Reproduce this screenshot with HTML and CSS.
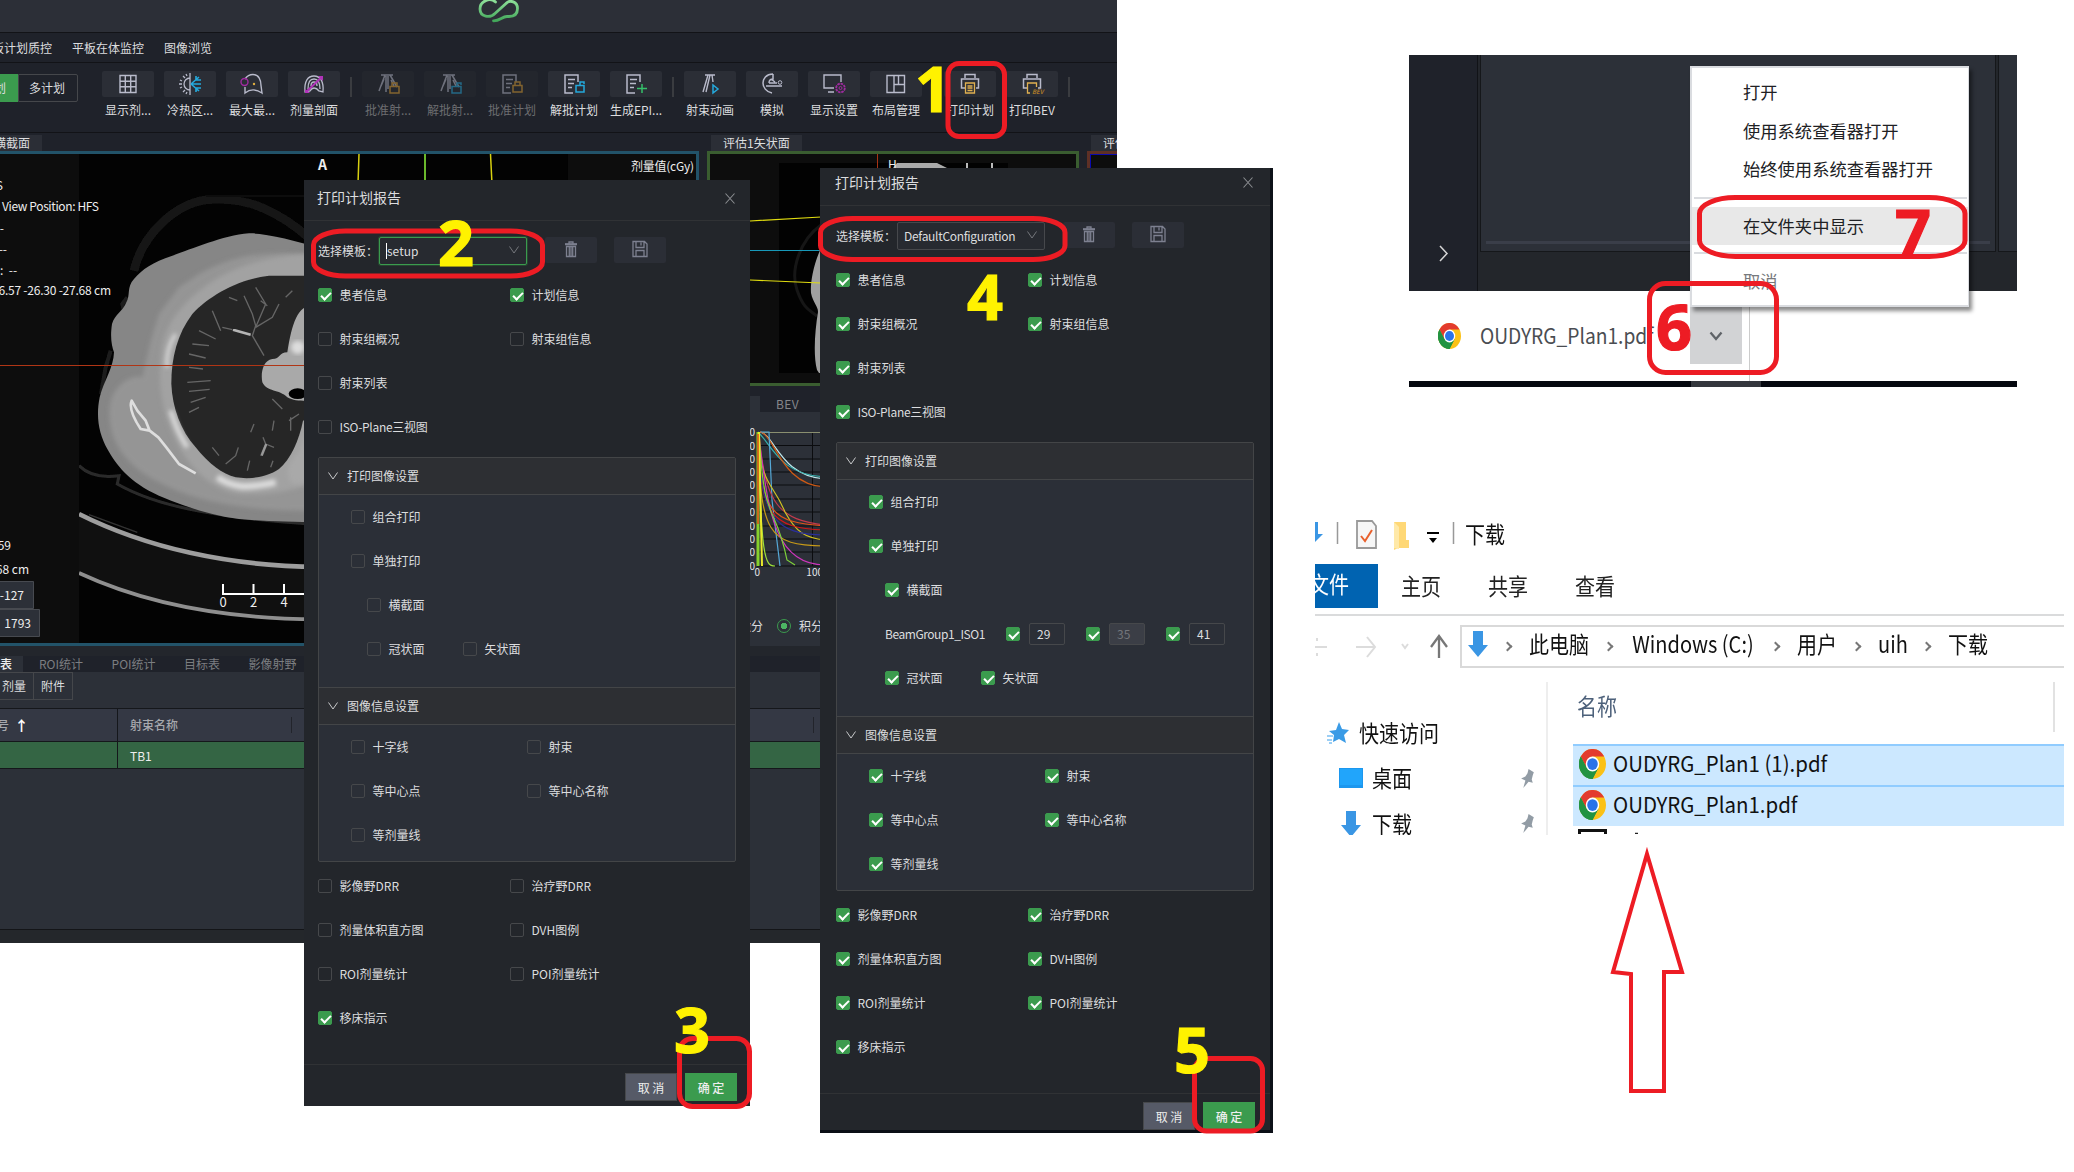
FILE: index.html
```html
<!DOCTYPE html>
<html lang="zh-CN">
<head>
<meta charset="utf-8">
<title>打印计划报告</title>
<link rel="stylesheet" href="styles.css">
</head>
<body>
<svg class="defs" width="0" height="0">
  <defs>
    <symbol id="chrome" viewBox="0 0 24 24" preserveAspectRatio="none">
      <circle cx="12" cy="12" r="12" fill="#fbc116"/>
      <path d="M1.600 6A12 12 0 0 0 12 24L17.200 15 6.800 15Z" fill="#229342"/>
      <path d="M1.600 6A12 12 0 0 1 22.400 6H12L6.800 15Z" fill="#e33b2e"/>
      <path d="M1.600 6A12 12 0 0 0 12 24L17.200 15 6.800 15Z" fill="#229342"/>
      <circle cx="12" cy="12" r="6" fill="#fff"/>
      <circle cx="12" cy="12" r="4.700" fill="#2a73e8"/>
    </symbol>
    <symbol id="trash" viewBox="0 0 14 18">
      <path d="M1 4.500h12M5 4V2h4v2M2.500 6.500v10h9v-10zM5.300 7v9M8.700 7v9M7 7v9" fill="none" stroke="#7d8090" stroke-width="1.300"/>
      <path d="M1 3.200h12v1.500H1z" fill="#7d8090"/>
    </symbol>
    <symbol id="save" viewBox="0 0 16 18">
      <path d="M1 1.500h11.500L15 4v12.500H1zM4 1.500v6h8v-6M9 2.500v3M4 16.500v-6h8v6" fill="none" stroke="#7d8090" stroke-width="1.300"/>
    </symbol>
    <symbol id="pin" viewBox="0 0 14 18">
      <path d="M8 0l5 3-1 3-1 4 1 3-4-1-5 6 2-7-4-2 4-2 2-3z" fill="#929ca5"/>
    </symbol>
    <symbol id="down" viewBox="0 0 20 26">
      <path d="M5 0h10v14h5L10 26 0 14h5z" fill="#3a96e4"/>
    </symbol>
    <symbol id="beam" viewBox="0 0 24 22">
      <path d="M5 2h12M9 2 3 18M10 3v16M12 3v13M14 2l7 12M8 6 5 13M15 7l3 6" fill="none" stroke="#b9bbcb" stroke-width="1.500"/>
    </symbol>
    <symbol id="doc" viewBox="0 0 24 22">
      <path d="M11 20H3V2h13v7M6 6.500h7M6 10.500h6M6 14.500h4" fill="none" stroke="#b9bbcb" stroke-width="1.500"/>
    </symbol>
    <symbol id="printer" viewBox="0 0 24 22">
      <path d="M7 5V1.500h10V5M7 15H3.500V6h17v9H18" fill="none" stroke="#b9bbcb" stroke-width="1.500"/>
    </symbol>
  </defs>
</svg>

<main class="canvas">
<section class="app">
  <header class="titlebar">
    <svg class="brand" viewBox="0 0 44 24" width="44" height="24">
      <defs><linearGradient id="lg" gradientUnits="userSpaceOnUse" x1="0" y1="0" x2="0" y2="22"><stop offset="0" stop-color="#8fe09a"/><stop offset="1" stop-color="#3fa457"/></linearGradient></defs>
      <path d="M18.500 2C13-3 3 1 3 9c0 8 10 9.500 15 4.500L29 3.500C33-1 40.500 2 40.500 8.500 40.500 14 37 16.500 32 16.500h-2C25 16.500 23 21 16.500 20.800" fill="none" stroke="url(#lg)" stroke-width="2.800" stroke-linecap="round"/>
    </svg>
  </header>
  <nav class="menubar"><span>板计划质控</span><span>平板在体监控</span><span>图像浏览</span></nav>
  <div class="toolbar">
    <div class="segment"><b>划</b><span>多计划</span></div>
    <div class="tools">
      <div class="tool"><i><svg viewBox="0 0 24 22"><path d="M4 2.500h16v17H4zM9.300 2.500v17M14.700 2.500v17M4 8.200h16M4 13.800h16" fill="none" stroke="#b9bbcb" stroke-width="1.400"/></svg></i><span>显示剂...</span></div>
      <div class="tool"><i><svg viewBox="0 0 24 22"><path d="M12 5a6 6 0 0 0 0 12zM12 0v22M5 3l2 2M1 11h3M5 19l2-2M8 1l1 2M2 7l2 1M2 15l2-1M8 21l1-2" fill="none" stroke="#b9bbcb" stroke-width="1.300"/><path d="M13 11h10M13 11l8-7M13 11l8 7M18 3v4h5M18 19v-4h5" fill="none" stroke="#25a9dc" stroke-width="1.600"/></svg></i><span>冷热区...</span></div>
      <div class="tool"><i><svg viewBox="0 0 24 22"><path d="M5 6C7 3 10 1.500 13 1.500c6 0 8 6 8 11l1 7.500c-6-4-12-4-17 0V14" fill="none" stroke="#b9bbcb" stroke-width="1.400"/><circle cx="4.500" cy="9" r="3.500" fill="none" stroke="#a02aa0" stroke-width="1.400"/><circle cx="14" cy="11" r="1.200" fill="#e0b040"/></svg></i><span>最大最...</span></div>
      <div class="tool"><i><svg viewBox="0 0 24 22"><path d="M3 19C2 8 6 3 12 3s10 5 9 16l-4-1C14 14 10 14 8 18zM6 16c0-7 2-10 6-10s6 3 6 10M9 13c0-3 1-4 3-4s3 2 3 4" fill="none" stroke="#b9bbcb" stroke-width="1.300"/><path d="M4 19 20 4" stroke="#b033b8" stroke-width="2"/><path d="M16 3h5v5zM3 16v4h5z" fill="#b033b8"/></svg></i><span>剂量剖面</span></div>
      <hr>
      <div class="tool off"><i><svg viewBox="0 0 24 22"><use href="#beam"/><path d="M14 13.500h9V20h-9zM16 13v-3h5v3" fill="none" stroke="#e0a030" stroke-width="1.500"/></svg></i><span>批准射...</span></div>
      <div class="tool off"><i><svg viewBox="0 0 24 22"><use href="#beam"/><path d="M14 13.500h9V20h-9zM19 13v-3h4v2" fill="none" stroke="#25a9dc" stroke-width="1.500"/></svg></i><span>解批射...</span></div>
      <div class="tool off"><i><svg viewBox="0 0 24 22"><use href="#doc"/><path d="M13 12.500h9V19h-9zM15 12V9h5v3" fill="none" stroke="#e0a030" stroke-width="1.500"/></svg></i><span>批准计划</span></div>
      <div class="tool"><i><svg viewBox="0 0 24 22"><use href="#doc"/><path d="M14 12.500h8V19h-8zM18 12V9h4v2" fill="none" stroke="#25a9dc" stroke-width="1.500"/></svg></i><span>解批计划</span></div>
      <div class="tool"><i><svg viewBox="0 0 24 22"><use href="#doc"/><path d="M13 15.500h10M18 11v9" fill="none" stroke="#35c06a" stroke-width="1.500"/></svg></i><span>生成EPI...</span></div>
      <hr>
      <div class="tool"><i><svg viewBox="0 0 24 22"><path d="M7 2h10M10 2 5 19M12 2 8 19M14 2l1 7" fill="none" stroke="#b9bbcb" stroke-width="1.400"/><path d="M15 12v8l5-4z" fill="none" stroke="#25a9dc" stroke-width="1.500"/></svg></i><span>射束动画</span></div>
      <div class="tool"><i><svg viewBox="0 0 24 22"><path d="M13 1C6 1 3 6 3 10s3 9 9 10M13 1v5c-3 0-4 1-4 4M6 13h16M9 10h8M11 6l4 3" fill="none" stroke="#b9bbcb" stroke-width="1.500"/><circle cx="20" cy="9.500" r="1.800" fill="none" stroke="#b9bbcb"/></svg></i><span>模拟</span></div>
      <div class="tool"><i><svg viewBox="0 0 24 22"><path d="M12 15H2V2h17v7M6 19h6" fill="none" stroke="#b9bbcb" stroke-width="1.400"/><circle cx="18.500" cy="15" r="4.300" fill="none" stroke="#a02aa0" stroke-width="1.800" stroke-dasharray="2.500 .8"/><circle cx="18.500" cy="15" r="1.500" fill="none" stroke="#a02aa0"/></svg></i><span>显示设置</span></div>
      <div class="tool"><i><svg viewBox="0 0 24 22"><path d="M3 2.500h17.500v17H3zM10 2.500v17M14.500 2.500v9M10 11.500h10.500" fill="none" stroke="#b9bbcb" stroke-width="1.400"/></svg></i><span>布局管理</span></div>
      <hr>
      <div class="tool"><i><svg viewBox="0 0 24 22"><use href="#printer"/><path d="M7.500 10h9v10h-9zM9.500 13h5M9.500 15h5M9.500 17.500h5" fill="none" stroke="#e0b050" stroke-width="1.300"/></svg></i><span>打印计划</span></div>
      <div class="tool"><i><svg viewBox="0 0 24 22"><use href="#printer"/><path d="M10 20H7.500V10h9v4" fill="none" stroke="#e0b050" stroke-width="1.300"/><text x="12" y="21" font-size="6" font-weight="700" fill="#a8772a">BEV</text></svg></i><span>打印BEV</span></div>
      <hr>
    </div>
  </div>

  <div class="work">
    <div class="col axial">
      <div class="viewtabs"><span>横截面</span></div>
      <div class="view">
        <svg class="scene" viewBox="0 154 696 489" width="696" height="489">
          <defs>
            <filter id="s1"><feGaussianBlur stdDeviation="2"/></filter>
            <filter id="s2"><feGaussianBlur stdDeviation="6"/></filter>
            <filter id="s3" x="-20%" y="-20%" width="140%" height="140%"><feGaussianBlur stdDeviation="12"/></filter>
            <clipPath id="slice"><path d="M0 0H1467V1467H0z"/></clipPath>
          </defs>
          <g transform="translate(79 154) scale(.33333)" clip-path="url(#slice)">
            <path d="M0 0H1467V1467H0z" fill="#030303"/>
            <path d="M0 1075C200 1180 450 1240 720 1240V1396C450 1390 200 1350 0 1255z" fill="#101010"/>
            <g fill="none" filter="url(#s1)">
              <path d="M165 350C190 240 290 150 380 138 500 125 600 170 700 260" stroke="#161616" stroke-width="26"/>
              <path d="M380 126H700" stroke="#111" stroke-width="6"/>
              <path d="M0 935C30 965 70 972 120 965L115 990C220 1050 380 1090 720 1112" stroke="#2c2c2c" stroke-width="9"/>
              <path d="M145 430 130 450 135 470M95 590 80 640 66 720" stroke="#1c1c1c" stroke-width="12"/>
            </g>
            <path d="M720 280C650 262 570 238 510 238 430 245 340 285 280 305 220 325 190 345 165 375 142 400 155 425 142 445 130 475 108 480 99 510 93 550 98 575 105 595 104 640 75 680 62 730 50 790 60 840 85 885 110 930 150 985 240 1025 330 1062 400 1085 480 1095 560 1102 640 1104 720 1104Z" fill="#868686" filter="url(#s1)"/>
            <path d="M720 1070C520 1075 350 1045 240 985 130 930 85 850 92 760 100 690 160 660 190 670L215 560 240 480 300 400 360 360C460 305 560 285 720 305Z" fill="#959595" filter="url(#s2)"/>
            <path d="M720 300C600 300 500 325 420 370 330 425 270 490 250 570 235 660 240 760 290 860 330 940 400 1010 480 1020 560 1025 650 1010 720 980Z" fill="#a2a2a2" filter="url(#s2)"/>
            <path d="M720 365H570C480 375 390 425 340 480 295 540 277 610 277 690 280 760 305 830 350 880 390 930 430 960 470 970 510 976 560 972 600 945 635 915 660 860 672 800L720 780Z" fill="#272727" filter="url(#s1)"/>
            <g fill="none" stroke="#666" stroke-width="4" filter="url(#s1)">
              <path d="M530 520 560 450 530 400M530 520 580 490 600 450M545 440 565 455M495 425 520 480 530 515 520 545 555 605M400 470 425 530M360 530 410 555M340 570 390 575M330 600 380 612M330 640 372 645M325 685 395 680M330 712 392 706M335 745 380 730M330 775 360 760M400 880 420 905M440 930 470 905 478 880M545 905 560 870 552 850M560 870 585 880M505 950 512 920M580 735 610 765M630 800 660 780M635 830V790M575 940 582 920M430 520 460 527M450 430 475 440M620 430 640 410M580 830 585 800M515 835 525 810"/>
            </g>
            <path d="M462 527 515 542" stroke="#b5b5b5" stroke-width="8" filter="url(#s1)"/>
            <path d="M548 905 562 870" stroke="#999" stroke-width="7" filter="url(#s1)"/>
            <path d="M720 455C660 440 640 500 625 595 600 595 605 615 580 615 550 620 545 660 550 685 565 715 600 705 625 730 650 745 690 740 720 740Z" fill="#a9a9a9" filter="url(#s1)"/>
            <path d="M720 820C670 820 680 860 660 890 630 930 620 940 630 975 645 1000 665 995 720 960Z" fill="#a9a9a9" filter="url(#s2)"/>
            <ellipse cx="656" cy="719" rx="27" ry="16" fill="#040404" filter="url(#s1)"/>
            <circle cx="656" cy="580" r="20" fill="#ddd" filter="url(#s2)"/>
            <path d="M158 740C150 760 165 795 185 825L212 830 200 800 175 770ZM212 830 238 850 262 880 300 930 350 958" fill="none" stroke="#dedede" stroke-width="8" stroke-linejoin="round" filter="url(#s1)"/>
            <g fill="none" stroke="#dcdcdc" filter="url(#s2)">
              <path d="M275 770C290 820 305 850 325 880" stroke-width="14"/>
              <path d="M290 540C270 570 262 600 264 640" stroke-width="10"/>
              <path d="M415 970C460 1000 500 1005 590 985" stroke-width="20"/>
            </g>
            <g fill="none" filter="url(#s1)">
              <path d="M0 1080C200 1180 450 1238 720 1238" stroke="#9d9d9d" stroke-width="14"/>
              <path d="M30 1082 175 1135" stroke="#333" stroke-width="4"/>
              <path d="M0 1257C200 1350 450 1395 720 1396" stroke="#8f8f8f" stroke-width="11"/>
            </g>
          </g>
          <path d="M0 365.500H304" stroke="#b03515"/>
          <path d="M359 154l-1 30M490.500 154l1.500 30" stroke="#d8d010" stroke-width="1.500"/>
          <path d="M425 154v30" stroke="#6ab82c" stroke-width="2"/>
          <path d="M223 584v10h81M253.500 584v10M284 584v10" fill="none" stroke="#fff" stroke-width="2"/>
          <g class="overlay">
            <text x="318" y="170" font-weight="600" font-size="14">A</text>
            <text x="694" y="171" text-anchor="end" textLength="63">剂量值(cGy)</text>
            <text x="3" y="190" text-anchor="end">HFS</text>
            <text x="2" y="211" textLength="97">View Position: HFS</text>
            <text x="4" y="233" text-anchor="end">--</text>
            <text x="7" y="254" text-anchor="end">--</text>
            <text x="0" y="275">:&#160; --</text>
            <text x="111" y="295" text-anchor="end" textLength="119">16.57 -26.30 -27.68 cm</text>
            <text x="11" y="550" text-anchor="end">59</text>
            <text x="29" y="574" text-anchor="end">68 cm</text>
            <text x="223" y="607" text-anchor="middle" font-size="13">0</text>
            <text x="253.500" y="607" text-anchor="middle" font-size="13">2</text>
            <text x="284" y="607" text-anchor="middle" font-size="13">4</text>
          </g>
          <g fill="#2c3038" stroke="#474a50"><path d="M-2 581.500H33.500V608.500H-2zM-2 609.500H39.500V636.500H-2z"/></g>
          <g class="overlay"><text x="24" y="600" text-anchor="end">-127</text><text x="31" y="628" text-anchor="end">1793</text></g>
        </svg>
      </div>
    </div>
    <div class="col sagittal">
      <div class="viewtabs"><span>评估1矢状面</span></div>
      <div class="view">
        <svg class="scene" viewBox="710 154 366 229" width="366" height="229">
          <path d="M779 163H1008V373H779z" fill="#020202"/>
          <path d="M821 225C800 240 790 270 797 290S810 310 817 316" fill="none" stroke="#161616" stroke-width="3"/>
          <path d="M825 240C815 258 810 280 811 293 813 303 818 306 818 312 815 330 813 355 817 370L819 373H830V240Z" fill="#a0a0a0"/>
          <path d="M893 168 897 163H937l10 5z" fill="#aaa"/>
          <path d="M967 163v6M992 163v6" stroke="#bbb" stroke-width="2"/>
          <path d="M877.500 154v20" stroke="#a83214"/>
          <path d="M750 221 821 217M750 280 821 283" stroke="#e0dc10" stroke-width="1.200"/>
          <path d="M750 250.500h71" stroke="#1798b8"/>
          <text class="overlay" x="888" y="169" font-size="14">H</text>
        </svg>
      </div>
      <div class="dvh">
        <div class="dvhtabs"><b></b><span>BEV</span></div>
        <svg class="chart" viewBox="707 412 372 200" width="372" height="200">
          <path d="M757 445.500H825M757 459H825M757 472H825M757 485H825M757 499H825M757 512H825M757 526H825M757 539H825M757 552H825M757 566H825M812.500 432V566" stroke="#0b0c0f" fill="none"/>
          <path d="M757 432.500H825" stroke="#8a8f70"/>
          <g fill="none" stroke-width="1.200">
            <path d="M760 432C775 435 780 476 825 479" stroke="#bfe9ee"/>
            <path d="M758 432C772 445 780 475 825 477" stroke="#35b0ad"/>
            <path d="M760 432C775 434 780 485 825 487" stroke="#d05a14"/>
            <path d="M761 432H769L772 500 780 566" stroke="#56a9d8"/>
            <path d="M759 432C764 505 780 520 825 525" stroke="#c43a4c"/>
            <path d="M758 432C762 490 772 480 785 512 796 532 805 538 825 540" stroke="#d2c321"/>
            <path d="M758 432C760 515 772 522 825 526" stroke="#e2541a"/>
            <path d="M758 432C760 515 770 528 825 530" stroke="#d01818"/>
            <path d="M758 432C760 520 775 534 825 535" stroke="#2a2f9a"/>
            <path d="M758 432C760 535 768 545 825 546" stroke="#c79a18"/>
            <path d="M758 432C768 500 770 565 825 565" stroke="#cf35bd"/>
            <path d="M759 432C764 530 775 500 787 560L795 565" stroke="#7fd13a"/>
            <path d="M758 432C761 560 765 566 775 566" stroke="#9ee23a"/>
            <path d="M758 432V566" stroke="#86d02c" stroke-width="3"/>
            <path d="M759 432 762 566" stroke="#e8e82a" stroke-width="2"/>
            <path d="M758 434v90" stroke="#e04a18" stroke-width="1.500"/>
          </g>
          <g class="axis">
            <text x="755" y="436">100</text><text x="755" y="450">90</text><text x="755" y="463">80</text><text x="755" y="476">70</text><text x="755" y="489">60</text><text x="755" y="503">50</text><text x="755" y="516">40</text><text x="755" y="530">30</text><text x="755" y="543">20</text><text x="755" y="556">10</text><text x="755" y="570">0</text>
            <text x="760" y="576">0</text><text x="823" y="576">100</text>
          </g>
        </svg>
        <div class="modes"><span>微分</span><i></i><span>积分</span></div>
      </div>
    </div>
    <div class="col third">
      <div class="viewtabs"><span>评估1冠状面</span></div>
      <div class="view"></div>
    </div>
  </div>

  <div class="lists">
    <div class="listtabs"><b>表</b><span>ROI统计</span><span>POI统计</span><span>目标表</span><span>影像射野</span></div>
    <div class="subtabs"><span>剂量</span><span>附件</span></div>
    <div class="thead"><span>号 &#160;<b>↑</b></span><span>射束名称<i></i><i></i></span></div>
    <div class="trow"><span></span><span>TB1</span></div>
  </div>
</section>

<section class="dialog first">
  <header><h2>打印计划报告</h2><svg width="10" height="11" viewBox="0 0 10 11"><path d="M.5.500l9 10M9.500.500l-9 10" stroke="#8b8d91" stroke-width="1.100"/></svg></header>
  <div class="template"><label>选择模板：</label><div class="select focus"><span>setup</span><svg width="10" height="8" viewBox="0 0 10 8"><path d="M.5.500 5 7 9.500.500" fill="none" stroke="#74777c"/></svg></div><button><svg width="14" height="18"><use href="#trash"/></svg></button><button><svg width="16" height="18"><use href="#save"/></svg></button></div>
  <div class="rows">
    <div class="row"><label class="on"><i></i>患者信息</label><label class="on"><i></i>计划信息</label></div>
    <div class="row"><label><i></i>射束组概况</label><label><i></i>射束组信息</label></div>
    <div class="row"><label><i></i>射束列表</label></div>
    <div class="row"><label class="tight"><i></i>ISO-Plane三视图</label></div>
  </div>
  <div class="collapse">
    <h3><svg width="10" height="8" viewBox="0 0 10 8"><path d="M.5.500 5 7 9.500.500" fill="none" stroke="#c8c9cb"/></svg>打印图像设置</h3>
    <div class="panel images">
      <div class="row"><label><i></i>组合打印</label></div>
      <div class="row"><label><i></i>单独打印</label></div>
      <div class="row nested"><label><i></i>横截面</label></div>
      <div class="row nested"><label><i></i>冠状面</label><label><i></i>矢状面</label></div>
    </div>
    <h3 class="second"><svg width="10" height="8" viewBox="0 0 10 8"><path d="M.5.500 5 7 9.500.500" fill="none" stroke="#c8c9cb"/></svg>图像信息设置</h3>
    <div class="panel">
      <div class="row"><label><i></i>十字线</label><label><i></i>射束</label></div>
      <div class="row"><label><i></i>等中心点</label><label><i></i>等中心名称</label></div>
      <div class="row"><label><i></i>等剂量线</label></div>
    </div>
  </div>
  <div class="rows tail">
    <div class="row"><label><i></i>影像野DRR</label><label><i></i>治疗野DRR</label></div>
    <div class="row"><label><i></i>剂量体积直方图</label><label><i></i>DVH图例</label></div>
    <div class="row"><label><i></i>ROI剂量统计</label><label><i></i>POI剂量统计</label></div>
    <div class="row"><label class="on"><i></i>移床指示</label></div>
  </div>
  <footer><button>取 消</button><button class="primary">确 定</button></footer>
</section>

<section class="dialog other">
  <header><h2>打印计划报告</h2><svg width="10" height="11" viewBox="0 0 10 11"><path d="M.5.500l9 10M9.500.500l-9 10" stroke="#8b8d91" stroke-width="1.100"/></svg></header>
  <div class="template"><label>选择模板：</label><div class="select"><span>DefaultConfiguration</span><svg width="10" height="8" viewBox="0 0 10 8"><path d="M.5.500 5 7 9.500.500" fill="none" stroke="#74777c"/></svg></div><button><svg width="14" height="18"><use href="#trash"/></svg></button><button><svg width="16" height="18"><use href="#save"/></svg></button></div>
  <div class="rows">
    <div class="row"><label class="on"><i></i>患者信息</label><label class="on"><i></i>计划信息</label></div>
    <div class="row"><label class="on"><i></i>射束组概况</label><label class="on"><i></i>射束组信息</label></div>
    <div class="row"><label class="on"><i></i>射束列表</label></div>
    <div class="row"><label class="on tight"><i></i>ISO-Plane三视图</label></div>
  </div>
  <div class="collapse">
    <h3><svg width="10" height="8" viewBox="0 0 10 8"><path d="M.5.500 5 7 9.500.500" fill="none" stroke="#c8c9cb"/></svg>打印图像设置</h3>
    <div class="panel images">
      <div class="row"><label class="on"><i></i>组合打印</label></div>
      <div class="row"><label class="on"><i></i>单独打印</label></div>
      <div class="row nested"><label class="on"><i></i>横截面</label></div>
      <div class="beams"><span>BeamGroup1_ISO1</span><label class="on"><i></i><b>29</b></label><label class="on"><i></i><b class="locked">35</b></label><label class="on"><i></i><b>41</b></label></div>
      <div class="row nested"><label class="on"><i></i>冠状面</label><label class="on"><i></i>矢状面</label></div>
    </div>
    <h3 class="second"><svg width="10" height="8" viewBox="0 0 10 8"><path d="M.5.500 5 7 9.500.500" fill="none" stroke="#c8c9cb"/></svg>图像信息设置</h3>
    <div class="panel">
      <div class="row"><label class="on"><i></i>十字线</label><label class="on"><i></i>射束</label></div>
      <div class="row"><label class="on"><i></i>等中心点</label><label class="on"><i></i>等中心名称</label></div>
      <div class="row"><label class="on"><i></i>等剂量线</label></div>
    </div>
  </div>
  <div class="rows tail">
    <div class="row"><label class="on"><i></i>影像野DRR</label><label class="on"><i></i>治疗野DRR</label></div>
    <div class="row"><label class="on"><i></i>剂量体积直方图</label><label class="on"><i></i>DVH图例</label></div>
    <div class="row"><label class="on"><i></i>ROI剂量统计</label><label class="on"><i></i>POI剂量统计</label></div>
    <div class="row"><label class="on"><i></i>移床指示</label></div>
  </div>
  <footer><button>取 消</button><button class="primary">确 定</button></footer>
</section>

<section class="browser">
  <div class="page"><aside><svg width="12" height="17" viewBox="0 0 12 17"><path d="M2 1l7 7.500L2 16" fill="none" stroke="#d5d5d5" stroke-width="1.500"/></svg></aside><div class="frame"><hr></div><div class="edge"></div></div>
  <div class="shelf">
    <svg width="23" height="26"><use href="#chrome"/></svg>
    <span class="file">OUDYRG_Plan1.pdf</span>
    <div class="more"><svg width="14" height="10" viewBox="0 0 14 10"><path d="M1.500 1.500 7 8l5.500-6.500" fill="none" stroke="#5f6368" stroke-width="2.300"/></svg></div>
  </div>
  <div class="taskbar"><i></i></div>
  <ul class="menu"><li>打开</li><li>使用系统查看器打开</li><li>始终使用系统查看器打开</li><li class="hover">在文件夹中显示</li><li class="dim">取消</li></ul>
</section>

<section class="explorer">
  <div class="quick">
    <svg width="145" height="34" viewBox="1315 519 145 34"><path d="M1315 522v20l8-8h-5v-12z" fill="#3a96e4"/><path d="M1337.500 522v22M1453.500 522v22" stroke="#999" stroke-width="1.500"/><path d="M1357 521h15l4 5v22h-19z" fill="#f6f6f6" stroke="#999" stroke-width="1.800"/><path d="M1361 536l4 5 7-11" fill="none" stroke="#e8602c" stroke-width="2"/><path d="M1394 522h12v18h3v8h-11l-4 2z" fill="#ffd876"/><path d="M1394 522l5 5v22l-5-1z" fill="#ffe9a8"/><path d="M1427 533h12" stroke="#000" stroke-width="2"/><path d="M1429 538h8l-4 5z"/></svg>
    <span class="tall">下载</span>
  </div>
  <div class="ribbon"><b><span class="tall">文件</span></b><span class="tall">主页</span><span class="tall">共享</span><span class="tall">查看</span></div>
  <div class="location">
    <svg width="145" height="43" viewBox="1315 625 145 43" fill="none"><g stroke="#dcdcdc" stroke-width="2"><path d="M1315 647h12M1317 638v3M1317 653v3M1356 647h19M1367 637l8 10-8 10"/><path d="M1402 644l3 4 3-4"/></g><path d="M1439 636v22M1431 647l8-11 8 11" stroke="#777" stroke-width="2.300"/></svg>
    <div class="address"><svg width="20" height="26"><use href="#down"/></svg><i></i><span class="tall">此电脑</span><i></i><span class="tall latin">Windows (C:)</span><i></i><span class="tall">用户</span><i></i><span class="tall latin">uih</span><i></i><span class="tall">下载</span></div>
  </div>
  <div class="content">
    <aside>
      <div class="item root"><svg width="24" height="24" viewBox="0 0 24 24"><path d="M13 1l3 7 7 1-5 5 2 8-7-4-6 3 1-7-5-4 7-1z" fill="#3a9be6"/><path d="M1 15h6M1 19h5M3 22h3" stroke="#7cc0f2" stroke-width="1.500"/></svg><span class="tall">快速访问</span></div>
      <div class="item"><svg width="24" height="20" viewBox="0 0 24 20"><path d="M0 0h24v20H0z" fill="#1c97ee"/><path d="M1 1h22v16H1z" fill="#21a5fb"/></svg><span class="tall">桌面</span><svg class="pin" width="17" height="19"><use href="#pin"/></svg></div>
      <div class="item"><svg width="20" height="26"><use href="#down"/></svg><span class="tall">下载</span><svg class="pin" width="17" height="19"><use href="#pin"/></svg></div>
    </aside>
    <div class="files">
      <div class="fhead"><span class="tall">名称</span></div>
      <div class="frow"><svg width="27" height="30"><use href="#chrome"/></svg><span class="long">OUDYRG_Plan1 (1).pdf</span></div>
      <div class="frow"><svg width="27" height="30"><use href="#chrome"/></svg><span class="long">OUDYRG_Plan1.pdf</span></div>
      <svg class="cut" width="80" height="8" viewBox="0 0 80 8"><path d="M6.500 8V4.500h26V8" fill="none" stroke="#111" stroke-width="3"/><path d="M62 7.500h3" stroke="#222" stroke-width="1.500"/></svg>
    </div>
  </div>
</section>

<svg class="marks" width="2074" height="1172" viewBox="0 0 2074 1172">
  <g fill="none" stroke="#ed1c24" stroke-width="5">
    <rect x="948" y="63.500" width="56.500" height="73" rx="11"/>
    <rect x="313.500" y="231" width="229" height="45" rx="32" ry="14"/>
    <rect x="820.500" y="218.500" width="244.500" height="41" rx="32" ry="14"/>
    <rect x="679.500" y="1038.500" width="70" height="68" rx="13"/>
    <rect x="1194.500" y="1058.500" width="68" height="72.500" rx="12"/>
    <rect x="1699.500" y="197.500" width="265.500" height="59" rx="36" ry="16"/>
    <rect x="1649.500" y="283.500" width="127" height="89" rx="16"/>
    <path d="M1647 854 1682 972H1664V1091H1631V974L1613 972Z" stroke-width="4"/>
  </g>
  <g class="yellow"><text x="915" y="112">1</text><text x="438" y="266">2</text><text x="674" y="1053">3</text><text x="967" y="320">4</text><text x="1174" y="1073">5</text></g>
  <g class="red"><text x="1656" y="350">6</text><text x="1895" y="255">7</text></g>
</svg>
</main>
</body>
</html>
```
FILE: styles.css
```css
* { box-sizing: border-box; }
body { margin: 0; background: #fff; font: 12px/16px "Noto Sans CJK SC", "Noto Sans", sans-serif; color: #dcdddf; }
h2, h3, ul { margin: 0; padding: 0; font-weight: 400; }
.defs { position: absolute; }
.canvas { position: relative; width: 2074px; height: 1172px; overflow: hidden; }
.canvas span, .canvas label, .canvas li { white-space: nowrap; }

/* planning application */
.app { position: absolute; left: 0; top: 0; width: 1117px; height: 943px; overflow: hidden; background: #24272b; display: flex; flex-direction: column; }
.titlebar { height: 33px; background: #2c2f37; border-bottom: 1px solid #121317; padding-left: 477px; }
.brand { display: block; }
.menubar { height: 30px; background: #1f222a; border-bottom: 1px solid #121317; display: flex; gap: 20px; align-items: center; }
.menubar span:first-child { margin-left: -8px; }
.toolbar { height: 70px; background: #1f222a; border-bottom: 1px solid #121317; display: flex; padding-top: 8px; gap: 24px; }
.segment { display: flex; width: 78px; height: 28px; margin-top: 3px; line-height: 28px; }
.segment b { width: 18px; background: #3b9b4e; font-weight: 400; text-indent: -6px; flex: none; overflow: hidden; }
.segment span { flex: 1; border: 1px solid #45474b; text-align: center; line-height: 26px; padding-right: 2px; border-radius: 0 2px 2px 0; }
.tools { display: flex; gap: 10px; }
.tools hr { width: 2px; height: 20px; margin: 6px 0 0; border: 0; background: #3a3c40; }
.tool { width: 52px; text-align: center; display: flex; flex-direction: column; align-items: center; }
.tool i { width: 52px; height: 26px; border-radius: 2px; background: #2b2e36; display: flex; justify-content: center; align-items: center; margin-bottom: 5px; }
.tool svg { width: 24px; height: 22px; overflow: visible; }
.tool.off { color: #6c6d70; }
.tool.off i { background: #23262d; }
.tool.off svg { opacity: .5; }
.work { height: 513px; background: #1f222a; display: flex; gap: 8px; }
.col { flex: none; display: flex; flex-direction: column; }
.axial { width: 699px; }
.sagittal { width: 372px; }
.third { width: 100px; }
.viewtabs { height: 18px; padding-top: 2px; display: flex; }
.viewtabs span { background: #2b2e36; padding: 0 12px; line-height: 15px; margin-left: 4px; }
.axial .viewtabs span { margin-left: -18px; }
.view { border: 3px solid #225369; background: #0d0d0d; overflow: hidden; }
.axial .view { border-left: 0; height: 495px; }
.sagittal .view { border-color: #3a5d30; height: 235px; }
.third .view { border-color: #5e3025; flex: 1; box-shadow: inset 1px 1px #0a0ab0; }
.scene { display: block; }
.overlay { fill: #eee; font-size: 12px; }
.dvh { margin-top: 10px; height: 250px; background: #2c3038; }
.dvhtabs { height: 16px; background: #1f222a; display: flex; }
.dvhtabs b { width: 53px; background: #2c3038; }
.dvhtabs span { padding-left: 16px; line-height: 15px; color: #85868a; letter-spacing: .4px; }
.chart { display: block; }
.axis text { fill: #e4e6ea; font-size: 10px; text-anchor: end; }
.modes { display: flex; align-items: center; padding-left: 32px; margin-top: 6px; }
.modes i { width: 14px; height: 14px; border: 1px solid #3b9b4e; border-radius: 50%; margin: 0 8px 0 14px; background: radial-gradient(#4cb463 0 3px, transparent 3.5px); }

.lists { flex: 1; display: flex; flex-direction: column; background: #2c3038; border-top: 10px solid #23262c; margin-bottom: 13px; border-bottom: 1px solid #141518; }
.listtabs { height: 16px; background: #1f222a; display: flex; color: #7c7e81; line-height: 15px; }
.listtabs b { width: 23px; background: #2c3038; color: #eee; margin-right: 16px; font-weight: 500; }
.listtabs span { margin-right: 28.5px; }
.subtabs { height: 28px; display: flex; margin-bottom: 8px; }
.subtabs span { border: 1px solid #45474b; border-left: 0; width: 34px; padding-left: 2px; line-height: 26px; }
.subtabs span + span { width: 39px; padding-left: 7px; }
.thead, .trow { display: flex; border-top: 1px solid #15171b; }
.thead span, .trow span { padding-left: 12px; }
.thead span:first-child, .trow span:first-child { width: 118px; padding-left: 0; border-right: 1px solid #15171b; text-indent: -3px; }
.thead { height: 33px; line-height: 32px; background: #343844; color: #a7a9ae; font-weight: 500; }
.thead b { color: #fff; font-size: 14px; margin-left: 3px; }
.thead span { display: flex; align-items: center; }
.thead i { width: 1px; height: 16px; background: #22242b; margin-left: 113px; }
.thead i + i { margin-left: 521px; }
.trow { height: 28px; line-height: 28px; background: #346544; border-bottom: 1px solid #15171b; color: #eee; }

/* report dialogs */
.dialog { position: absolute; background: #23262b; display: flex; flex-direction: column; }
.first { left: 304px; top: 180px; width: 446px; height: 926px; }
.other { left: 820px; top: 168px; width: 453px; height: 965px; border-bottom: 3px solid #0b0f16; border-right: 3px solid #0d1118; }
.dialog > * { margin-left: 14px; width: 418px; flex: none; }
.other > * { margin-left: 16px; }
.dialog > header, .dialog > footer { width: auto; margin-left: 0; display: flex; padding-left: 13px; }
.other > header, .other > footer { padding-left: 15px; }
.dialog > header { height: 41px; border-bottom: 1px solid #303235; align-items: center; padding-bottom: 4px; }
.other > header { height: 38px; padding-bottom: 8px; }
.dialog h2 { font-size: 14px; width: 408px; padding-bottom: 2px; }
.template { height: 52px; padding-top: 16px; display: flex; }
.template label { width: 61px; line-height: 27px; }
.select { width: 148px; height: 28px; border: 1px solid #46484c; background: #272a30; display: flex; align-items: center; justify-content: space-between; padding: 0 7px 0 6px; border-radius: 2px; margin-right: 18px; letter-spacing: -.3px; }
.select svg { margin-top: -2px; }
.select.focus { border-color: #3b9b4e; box-shadow: 0 0 0 1px #274531; }
.focus span { border-left: 1px solid #fff; letter-spacing: 0; }
.template button { width: 52px; height: 26px; margin-right: 17px; padding: 0 0 3px; border: 0; border-radius: 2px; background: #2b2e36; display: flex; align-items: center; justify-content: center; }
.row { height: 44px; display: grid; grid-template-columns: 192px 1fr; align-items: center; }
.row label, .beams label { display: flex; align-items: center; gap: 7.5px; }
.row i, .beams i { position: relative; width: 14px; height: 14px; border: 1px solid #46484b; border-radius: 2px; flex: none; }
.tight { letter-spacing: -.3px; }
.row .on i, .beams .on i { background: #3b9b4e; border-color: #3b9b4e; }
.on i::after { content: ""; position: absolute; left: 4px; top: 1px; width: 4px; height: 8px; border: solid #fff; border-width: 0 2px 2px 0; transform: rotate(45deg); }
.collapse { margin-top: 8px; border: 1px solid #434547; border-radius: 2px; background: #2b2f37; padding-bottom: 4px; }
.collapse h3 { font-size: 12px; height: 37px; display: flex; align-items: center; gap: 9px; padding-left: 9px; background: #2d2f33; border-bottom: 1px solid #434547; }
.collapse .second { border-top: 1px solid #434547; height: 38px; }
.panel { padding-left: 32px; }
.panel .row { grid-template-columns: 176px 1fr; }
.images { padding-bottom: 16px; }
.panel .nested { padding-left: 16px; grid-template-columns: 96px 1fr; }
.beams { height: 44px; display: flex; align-items: center; padding-left: 16px; }
.beams span { width: 121px; letter-spacing: -.45px; }
.beams label { gap: 9px; margin-right: 21px; }
.beams b { width: 36px; height: 22px; border: 1px solid #46484b; border-radius: 2px; font-weight: 400; line-height: 20px; padding-left: 7px; }
.beams .locked { background: #3b3e46; color: #73767c; }
.tail { margin-top: 2px; }
.dialog > footer { margin-top: 24px; border-top: 1px solid #303235; padding-top: 8px; }
.dialog footer button { width: 52px; height: 28px; margin: 0 0 0 308px; padding: 0; border: 1px solid #46484b; background: #565a67; color: #eee; font: 12px "Noto Sans CJK SC", sans-serif; }
.dialog footer .primary { margin-left: 8px; border-color: #3b9b4e; background: #3b9b4e; font-weight: 500; }

/* browser download shelf */
.browser { position: absolute; left: 1409px; top: 55px; width: 608px; height: 332px; }
.page { height: 236px; background: #23262b; display: flex; }
.page aside { width: 69px; background: #1f222a; border-right: 1px solid #111317; padding: 190px 0 0 29px; }
.frame { width: 516px; height: 197px; margin-left: 2px; border: 1px solid #15171a; border-top: 0; background: #2c3038; display: flex; align-items: flex-end; padding: 0 5px 7px; }
.frame hr { flex: 1; height: 3px; margin: 0; border: 0; background: #3a3e49; }
.edge { flex: 1; height: 197px; margin-left: 2px; border: 1px solid #15171a; border-width: 0 0 1px 1px; background: #2c3038; }
.shelf { height: 90px; display: flex; align-items: center; padding-left: 29px; background: #fff; }
.file { width: 193px; margin-left: 19px; font-size: 21px; line-height: 30px; color: #4a4d52; transform: translateY(-1px) scaleX(.915); transform-origin: 0 50%; }
.more { width: 60px; height: 90px; border-right: 1px solid #ccc; background: linear-gradient(#d2d3d5 0 0) no-repeat 0 0 / 52px 73px; padding: 37px 0 0 19px; margin-left: 17px; }
.taskbar { height: 6px; background: #05080f; padding-left: 282px; }
.taskbar i { display: block; width: 70px; height: 6px; background: #34373d; }
.menu { position: absolute; left: 281px; top: 11px; width: 279px; height: 241px; border: 2px solid #dadce0; border-right-width: 1px; background: #fff; box-shadow: 3px 4px 4px rgba(0,0,0,.45); list-style: none; padding-top: 6px; color: #202124; font-size: 17.3px; }
.menu li { height: 38.500px; line-height: 35px; padding-left: 51px; }
.menu .hover { background: #e8e8e8; height: 38px; margin: 17px 0; position: relative; line-height: 37px; }
.menu .hover::before, .menu .hover::after { content: ""; position: absolute; left: 2px; right: 1px; top: -10px; border-top: 2px solid #dadce0; }
.menu .hover::after { top: 45px; }
.menu .dim { color: #77797d; line-height: 37px; }

/* file explorer */
.explorer { position: absolute; left: 1315px; top: 519px; width: 749px; height: 316px; overflow: hidden; color: #111; font-size: 20px; line-height: 24px; background: #fff; }
.tall { display: inline-block; transform: scaleY(1.16); }
.quick { height: 45px; display: flex; align-items: flex-start; gap: 5px; }
.quick .tall { margin-top: 3px; }
.ribbon { height: 52px; border-bottom: 2px solid #dadbdc; display: flex; align-items: center; gap: 47px; padding-bottom: 6px; color: #222; }
.ribbon b { width: 63px; height: 44px; background: #0063b1; color: #fff; font-weight: 400; padding: 8px 0 0; text-indent: -3px; margin-right: -24px; }
.ribbon > .tall { padding-bottom: 1px; }
.location { display: flex; padding-top: 9px; }
.address { flex: 1; height: 43px; border: 2px solid #d9d9d9; border-right: 0; display: flex; align-items: center; padding: 0 0 5px 6px; }
.address i { width: 7px; height: 7px; border: solid #777; border-width: 2px 2px 0 0; transform: rotate(45deg); margin: 4px 18px 0 16px; flex: none; }
.address .latin { text-align: center; width: 126px; }
.address .latin ~ .latin { width: 29px; }
.content { display: flex; margin-top: 14px; height: 160px; }
.content aside { width: 233px; border-right: 2px solid #eee; padding-top: 28px; flex: none; }
.item { height: 45.500px; display: flex; align-items: center; padding-left: 24px; gap: 9px; }
.item svg { flex: none; width: 24px; }
.item.root { padding-left: 11px; }
.item svg.pin { width: 17px; margin-left: 98px; }
.files { flex: 1; padding-left: 25px; }
.fhead { height: 62px; color: #4c607a; padding: 12px 0 0 4px; background: linear-gradient(#e2e2e2 0 0) no-repeat 480px 0 / 2px 50px; }
.frow { height: 41px; border-top: 2px solid #90ccff; background: #cce8ff; display: flex; align-items: center; padding: 0 0 3px 6px; gap: 7px; }
.long { font-size: 21.500px; line-height: 30px; transform-origin: 0 50%; transform: translateY(-1px) scaleX(.95); }
.cut { display: block; }

/* step annotations */
.marks { position: absolute; left: 0; top: 0; }
.marks text { font: 700 63px "Open Sans", "Noto Sans", sans-serif; stroke-width: 1.2px; }
.yellow { fill: #fff200; stroke: #fff200; }
.red { fill: #ed1c24; stroke: #ed1c24; }
```
